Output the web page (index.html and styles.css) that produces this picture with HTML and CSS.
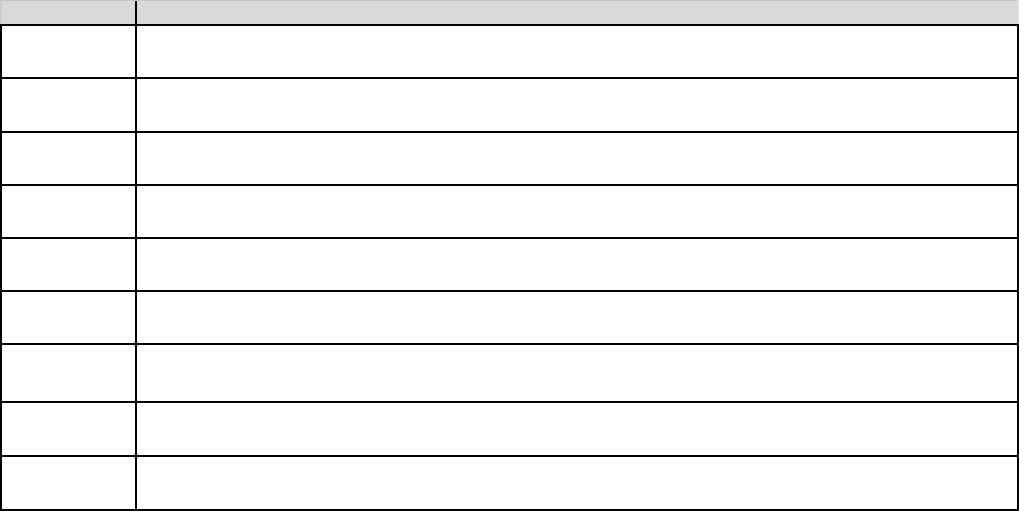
FILE: index.html
```html
<!DOCTYPE html>
<html>
<head>
<meta charset="utf-8">
<link rel="stylesheet" href="styles.css">
</head>
<body>
<div class="table">
  <div class="row head"><div class="cell first"></div><div class="cell"></div></div>
  <div class="row r53"><div class="cell first"></div><div class="cell"></div></div>
  <div class="row r54"><div class="cell first"></div><div class="cell"></div></div>
  <div class="row r53"><div class="cell first"></div><div class="cell"></div></div>
  <div class="row r53"><div class="cell first"></div><div class="cell"></div></div>
  <div class="row r53"><div class="cell first"></div><div class="cell"></div></div>
  <div class="row r53"><div class="cell first"></div><div class="cell"></div></div>
  <div class="row r58"><div class="cell first"></div><div class="cell"></div></div>
  <div class="row r54"><div class="cell first"></div><div class="cell"></div></div>
  <div class="row r54 last"><div class="cell first"></div><div class="cell"></div></div>
</div>
</body>
</html>
```

FILE: styles.css
```css
html, body {
  margin: 0;
  padding: 0;
  background: #ffffff;
  font-family: "Liberation Sans", Arial, sans-serif;
}
.table {
  width: 1019px;
  display: flex;
  flex-direction: column;
}
.row {
  display: grid;
  grid-template-columns: 135px 1fr;
  box-sizing: border-box;
  border-top: 2px solid #000;
  border-left: 2px solid #000;
  border-right: 2px solid #000;
}
.cell.first {
  border-right: 2px solid #000;
}
.head {
  height: 24px;
  background: #d9d9d9;
  border-top: 1px solid #c8c8c8;
  border-left: 2px solid #cfcfcf;
  border-right: 2px solid #e0e0e0;
}
.r53 { height: 53px; }
.r54 { height: 54px; }
.r58 { height: 58px; }
.last {
  height: 56px;
  border-bottom: 2px solid #000;
}
```
